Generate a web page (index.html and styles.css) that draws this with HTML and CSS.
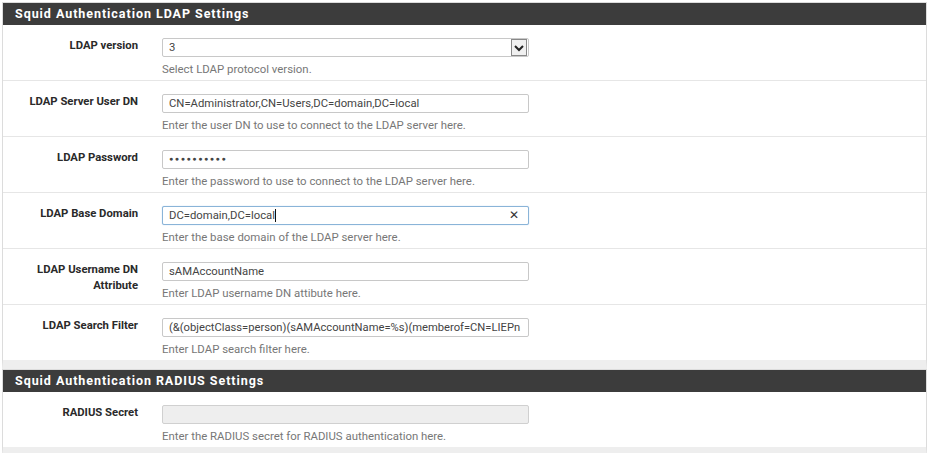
FILE: index.html
```html
<!DOCTYPE html>
<html>
<head>
<meta charset="utf-8">
<link rel="stylesheet" href="styles.css">
</head>
<body>
<div class="page">
  <section class="panel">
    <h2 class="panel-title">Squid Authentication LDAP Settings</h2>
    <div class="row">
      <div class="label">LDAP version</div>
      <div class="field">
        <div class="input select"><span class="val">3</span><span class="arrow"><svg width="12" height="10" viewBox="0 0 12 10"><path d="M2 3 L6 7 L10 3" fill="none" stroke="#222" stroke-width="2"/></svg></span></div>
        <div class="help">Select LDAP protocol version.</div>
      </div>
    </div>
    <div class="row">
      <div class="label">LDAP Server User DN</div>
      <div class="field">
        <div class="input"><span class="val">CN=Administrator,CN=Users,DC=domain,DC=local</span></div>
        <div class="help">Enter the user DN to use to connect to the LDAP server here.</div>
      </div>
    </div>
    <div class="row">
      <div class="label">LDAP Password</div>
      <div class="field">
        <div class="input"><span class="dots">●●●●●●●●●●</span></div>
        <div class="help">Enter the password to use to connect to the LDAP server here.</div>
      </div>
    </div>
    <div class="row">
      <div class="label">LDAP Base Domain</div>
      <div class="field">
        <div class="input focus"><span class="val">DC=domain,DC=local</span><span class="caret"></span><span class="clear">✕</span></div>
        <div class="help">Enter the base domain of the LDAP server here.</div>
      </div>
    </div>
    <div class="row">
      <div class="label">LDAP Username DN<br>Attribute</div>
      <div class="field">
        <div class="input"><span class="val">sAMAccountName</span></div>
        <div class="help">Enter LDAP username DN attibute here.</div>
      </div>
    </div>
    <div class="row">
      <div class="label">LDAP Search Filter</div>
      <div class="field">
        <div class="input"><span class="val clip">(&amp;(objectClass=person)(sAMAccountName=%s)(memberof=CN=LIEPn</span></div>
        <div class="help">Enter LDAP search filter here.</div>
      </div>
    </div>
  </section>
  <section class="panel">
    <h2 class="panel-title">Squid Authentication RADIUS Settings</h2>
    <div class="row">
      <div class="label">RADIUS Secret</div>
      <div class="field">
        <div class="input disabled"></div>
        <div class="help">Enter the RADIUS secret for RADIUS authentication here.</div>
      </div>
    </div>
  </section>
</div>
</body>
</html>
```
FILE: styles.css
```css
* { box-sizing: border-box; }
html, body { margin: 0; padding: 0; background: #fff; }
body { font-family: Roboto, "Liberation Sans", Arial, sans-serif; color: #333; }
.page { padding: 2px 4px 0 2px; width: 931px; }
.panel {
  border: 1px solid #dcdcdc;
  border-bottom: 9px solid #eeeeee;
  background: #fff;
}
.panel-title {
  margin: 0;
  height: 22px;
  line-height: 22px;
  background: #3c3c3c;
  color: #fff;
  font-size: 12.5px;
  font-weight: bold;
  letter-spacing: 0.95px;
  padding-left: 12px;
}
.row {
  display: grid;
  grid-template-columns: 135px 367px;
  column-gap: 24px;
  padding: 13px 0 4px;
  border-bottom: 1px solid #e6e6e6;
}
.panel .row:last-child { border-bottom: none; }
.label {
  text-align: right;
  font-size: 11.3px;
  font-weight: bold;
  line-height: 16px;
  color: #2a2a2a;
}
.input {
  position: relative;
  height: 19px;
  border: 1px solid #c8c8c8;
  border-radius: 2px;
  background: #fff;
  padding: 0 6px;
  font-size: 11.3px;
  line-height: 17px;
  color: #444;
  white-space: nowrap;
  overflow: hidden;
  display: flex;
  align-items: center;
}
.input .val.clip { font-size: 11.2px; }
.input.focus { border-color: #8ab4d8; box-shadow: 0 0 1px #9cc3e6; }
.input.disabled { background: #eeeeee; border-color: #d0d0d0; }
.dots { font-size: 7px; letter-spacing: 1.6px; color: #444; }
.caret { display: inline-block; width: 1px; height: 13px; background: #111; margin-left: 0; }
.clear { position: absolute; right: 9px; top: 0; font-size: 12px; color: #333; line-height: 17px; }
.select { padding-right: 0; }
.select .arrow {
  position: absolute;
  right: 1px;
  top: 0;
  width: 16px;
  height: 17px;
  border: 1px solid #888;
  background: #f0f0f0;
  display: flex;
  align-items: center;
  justify-content: center;
}
.help {
  margin-top: 5px;
  font-size: 11.4px;
  line-height: 14px;
  color: #777;
}
```
